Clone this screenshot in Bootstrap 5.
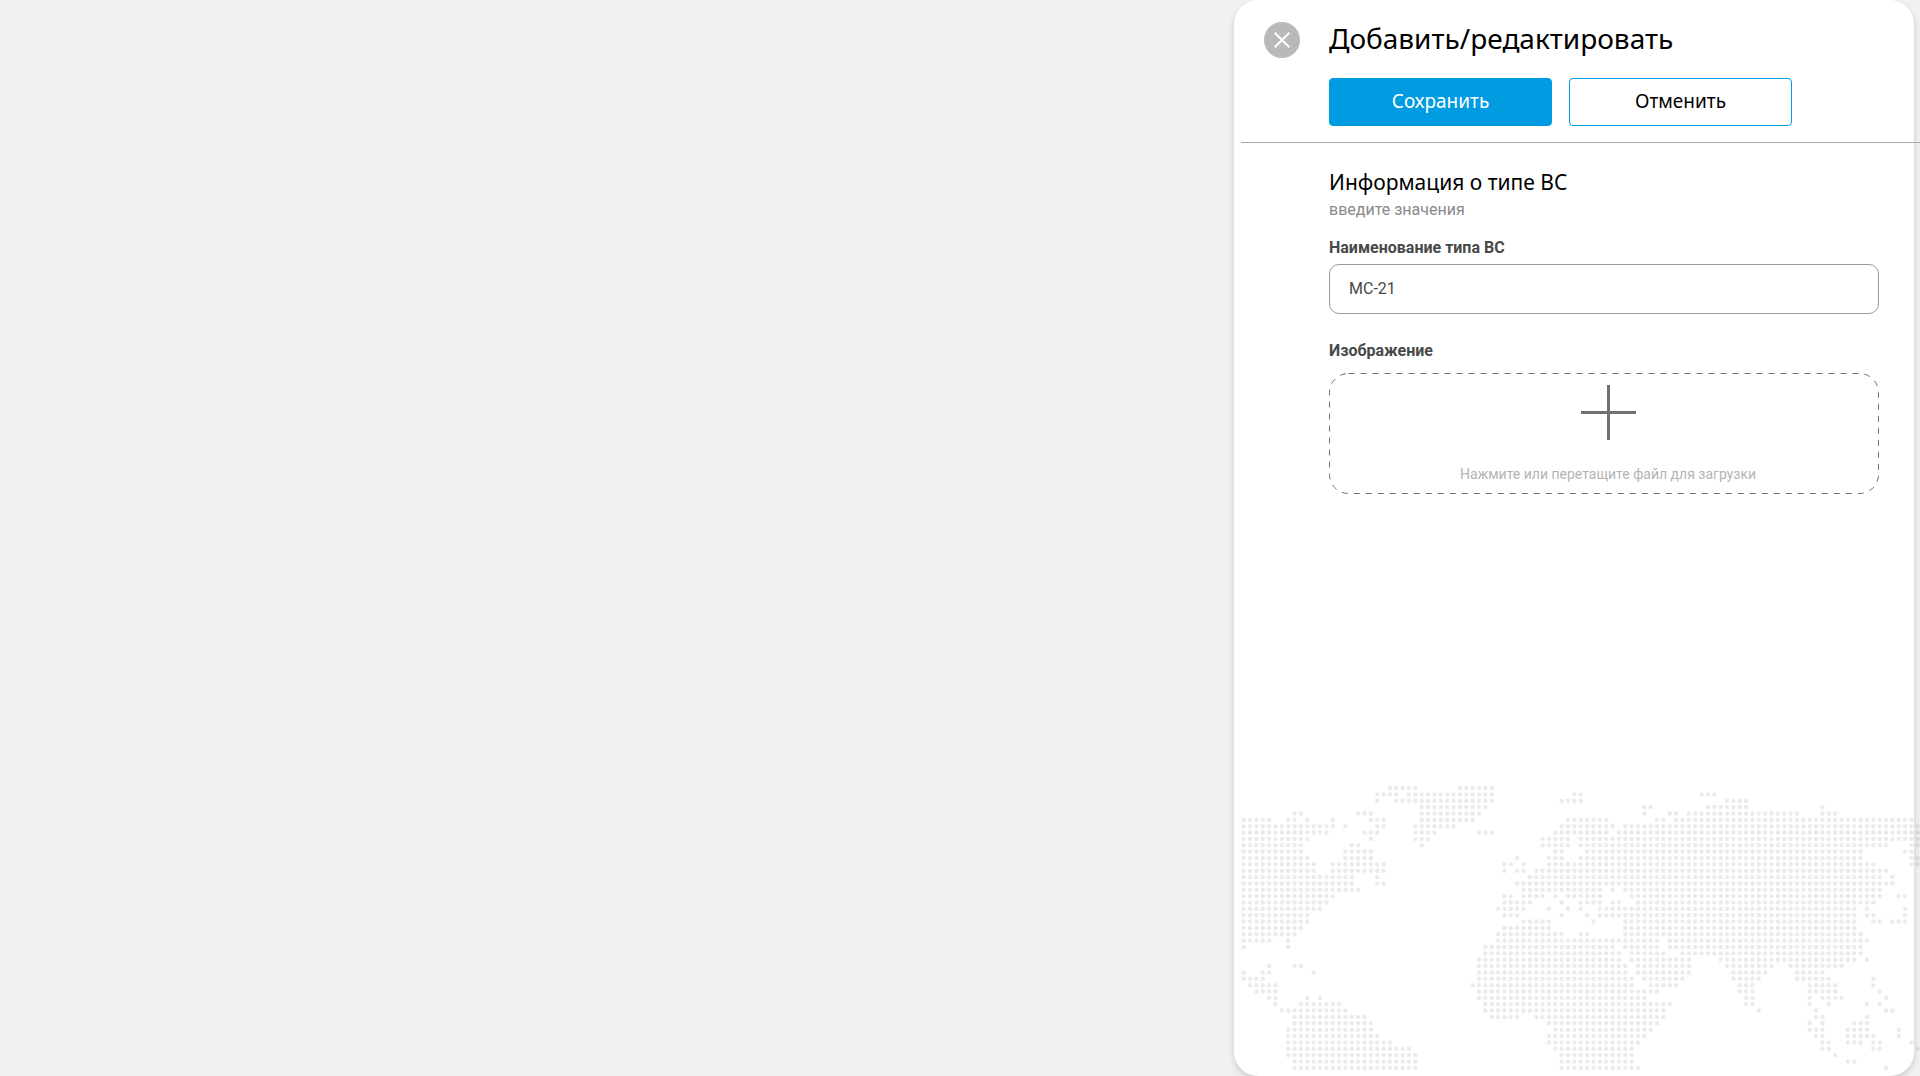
<!DOCTYPE html>
<html lang="ru">
<head>
<meta charset="utf-8">
<meta name="viewport" content="width=device-width, initial-scale=1">
<title>Добавить/редактировать</title>
<link href="https://cdn.jsdelivr.net/npm/bootstrap@5.3.0/dist/css/bootstrap.min.css" rel="stylesheet">
<style>
  body { background: #f1f1f1; font-family: "Noto Sans", sans-serif; color: #000; overflow-x: hidden; }
  .drawer { width: 680px; max-width: 100%; background: #fff; border-radius: 24px; box-shadow: 0 3px 6px rgba(0,0,0,.16); margin-right: 6px; }
  .drawer-body { margin-left: 7px; margin-right: -7px; padding-bottom: 3px; }
  .drawer-head { padding: 16px 42px 16px 23px; gap: 29px; border-bottom: 1px solid #a9a9a9; }
  .close-btn { width: 36px; height: 36px; margin-top: 6px; background: #b9b9b9; }
  .drawer-title { font-size: 28px; line-height: 44px; font-weight: 400; margin-bottom: 18px; }
  .action { flex: 0 1 223px; height: 48px; border: 1px solid #009be1; border-radius: 4px; font-size: 19px; line-height: 24px; padding: 0 0 2px; }
  .action-main, .action-main:hover { background: #009be1; color: #fff; }
  .action-plain, .action-plain:hover { background: #fff; color: #000; }
  .actions { gap: 17px; }
  .fields { padding: 24px 42px 0 88px; }
  .section-title { font-size: 21px; line-height: 31px; font-weight: 400; margin: 0; }
  .section-note { font-family: Roboto, sans-serif; font-size: 16px; line-height: 24px; color: #8a8a8a; margin: 0 0 14px; }
  .field-label { font-family: Roboto, sans-serif; font-size: 16px; line-height: 24px; font-weight: 700; color: #484848; margin: 0; }
  .field-input { font-family: Roboto, sans-serif; height: 50px; border: 1px solid #9a9a9a; border-radius: 10px; padding: 0 19px 2px; font-size: 16px; color: #484848; margin: 4px 0 25px; }
  .drop-area { height: 121px; margin-top: 10px; padding: 12px 0 10px 8px; cursor: pointer; }
  .drop-outline { inset: 0; color: #707070; }
  .drop-outline rect { width: calc(100% - 1px); height: calc(100% - 1px); }
  .drop-hint { font-family: Roboto, sans-serif; font-size: 14px; line-height: 20px; color: #b4b4b4; }
</style>
<script src="https://cdn.jsdelivr.net/npm/bootstrap@5.3.0/dist/js/bootstrap.bundle.min.js"></script>
</head>
<body>
<div class="d-flex justify-content-end min-vh-100">
  <aside class="drawer d-flex flex-column">
    <div class="drawer-body d-flex flex-column flex-grow-1">
      <header class="drawer-head d-flex align-items-start">
        <button type="button" class="close-btn btn rounded-circle border-0 p-0 d-flex align-items-center justify-content-center flex-shrink-0" aria-label="Закрыть">
          <svg width="16" height="16" viewBox="0 0 16 16" fill="none" stroke="#fff" stroke-width="2"><path d="M.7.7l14.6 14.6M15.3.7.7 15.3"/></svg>
        </button>
        <div class="flex-grow-1">
          <h1 class="drawer-title">Добавить/редактировать</h1>
          <div class="actions d-flex">
            <button type="button" class="btn action action-main">Сохранить</button>
            <button type="button" class="btn action action-plain">Отменить</button>
          </div>
        </div>
      </header>

      <form class="fields">
        <h2 class="section-title">Информация о типе ВС</h2>
        <p class="section-note">введите значения</p>
        <label class="field-label d-block" for="typeName">Наименование типа ВС</label>
        <input class="form-control field-input" type="text" id="typeName" value="МС-21">
        <label class="field-label d-block" for="typeImage">Изображение</label>
        <label class="drop-area position-relative d-flex flex-column align-items-center justify-content-between" for="typeImage">
          <svg class="drop-outline position-absolute w-100 h-100" fill="none" stroke="currentColor" aria-hidden="true"><rect x=".5" y=".5" rx="19" stroke-dasharray="6 6"/></svg>
          <svg width="55" height="55" viewBox="0 0 55 55" stroke="#707070" stroke-width="3"><path d="M27.5 0v55M0 27.5h55"/></svg>
          <span class="drop-hint">Нажмите или перетащите файл для загрузки</span>
          <input class="visually-hidden" type="file" id="typeImage" accept="image/*">
        </label>
      </form>

      <svg class="mt-auto w-100 d-block" viewBox="0 0 680 288" aria-hidden="true">
        <path id="worldDots" transform="translate(2.67 3) scale(6.36)" fill="none" stroke="#000" stroke-opacity=".08" stroke-width=".7" stroke-linecap="round" stroke-dasharray="0 1"/>
      </svg>
    </div>
  </aside>
</div>
<script>
  // World map: one entry per row of dots, each a list of column ranges.
  const rows = [
    '23-27 34-39', '21-24 26-39 52-53 72-74', '21 24-39 50-53 76-79', '28-38 63-64 73-79 91',
    '8-9 18-20 28-37 63 67-68 70-87 91-93', '0-4 7-8 10 14 20-22 28-36 51-57 65-66 68-105',
    '0-14 16 21-22 27-33 50-58 60-106', '0-13 19-21 27-30 37-39 49-57 59-106',
    '0-10 20 27-29 47-51 53-106', '0-9 17-18 28 47-51 53-101 105-106', '0-9 16-20 49-50 54-97 104-105',
    '0-10 16-20 43 48-50 53-97 105-106', '0-11 14-22 41-42 44 48-99 105-106', '0-11 14-22 41 43-44 46-101',
    '0-17 21 45-100 102', '0-17 21-22 43-102', '0-18 44-56 58 60-100', '0-14 41-42 44-47 49 51-56 61-100 103-104',
    '0-13 41-45 50 53-56 58-59 62-99', '0-12 40-44 48 51 53 56-96 98 104', '0-10 41-43 50 54 56-96 98-99 104',
    '0-10 44-48 55 60-96 99-100 102-104', '0-9 41-48 60-96', '0-8 40-50 53-54 60-97', '0-4 7 40-65 67-98',
    '0 7 38-58 60-65 67-97', '38-59 61-66 69-97', '37-59 61-70 75-96 98', '4 8-9 37-60 62-70 76-83 86-94',
    '0 3-4 11 37-60 62-70 77-82 87-91', '0-3 37-61 63-69 77-81 87-92 99', '1-5 36-61 64-68 78-80 89-93 99',
    '2-5 37-65 78-80 89-93 100', '4-5 10 12 37-63 79-80 89 91-94 101', '5 9-15 38-67 79-80 89 92 98 100',
    '6-16 38-66 81 90 101-102', '8-19 39-43 46-66 90-91 98', '8-20 48-65 89 91 96-98',
    '7-20 49-64 89-91 95-98 103', '7-21 48-63 90-91 95-99 103', '7-23 48-62 91-92 95-97 99-100 105',
    '7-26 49-61 91-92 99-100 106', '7-27 50-61 93', '8-27 50-61 95-96', '8-27 50-62 101'
  ];
  document.getElementById('worldDots').setAttribute('d', rows.map((row, y) =>
    row.split(' ').map(range => {
      const [from, to = from] = range.split('-').map(Number);
      return `M${from} ${y}h${to - from + 0.05}`;
    }).join('')
  ).join(''));
</script>
</body>
</html>
